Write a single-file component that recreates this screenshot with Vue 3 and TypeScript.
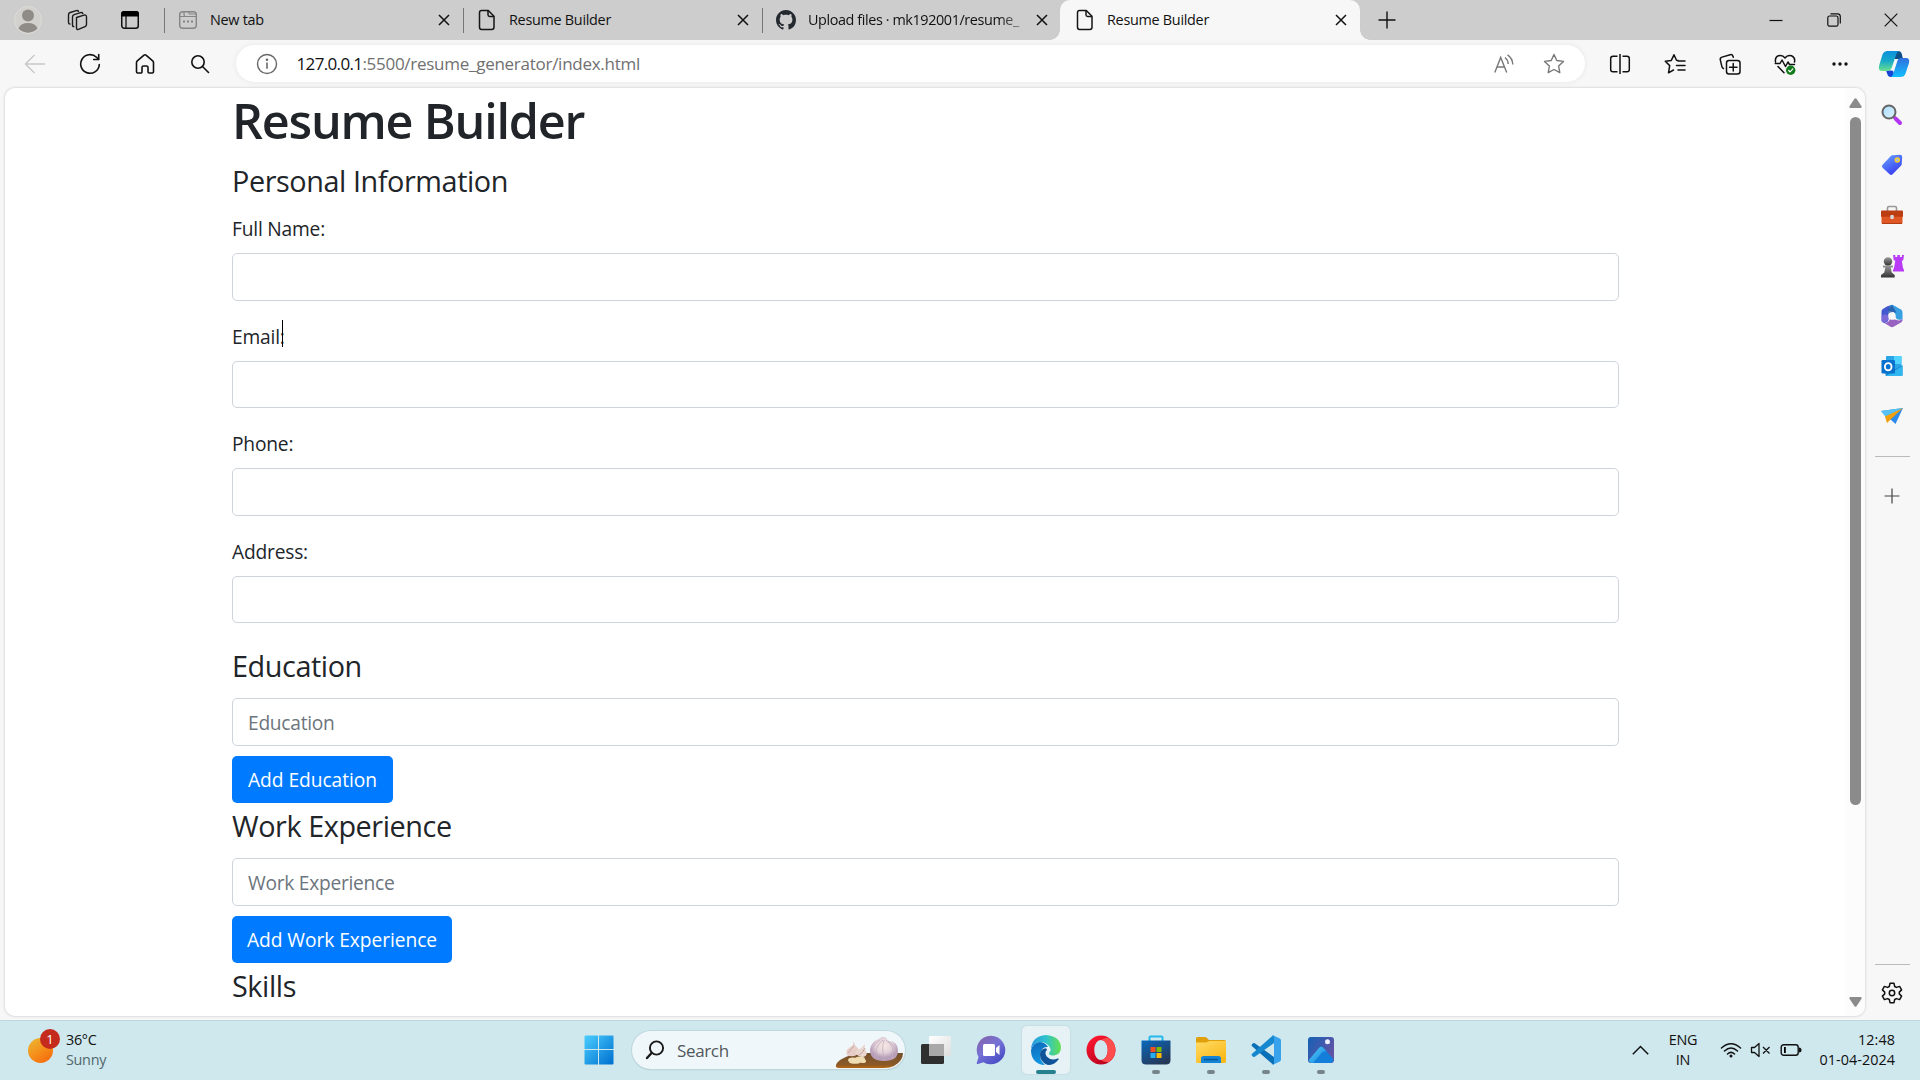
<script setup lang="ts">
import { ref } from 'vue'

interface Tab {
  title: string
  icon: 'newtab' | 'file' | 'github'
  active?: boolean
}

const tabs: Tab[] = [
  { title: 'New tab', icon: 'newtab' },
  { title: 'Resume Builder', icon: 'file' },
  { title: 'Upload files · mk192001/resume_', icon: 'github' },
  { title: 'Resume Builder', icon: 'file', active: true },
]

const fields = ref([
  { label: 'Full Name:', value: '' },
  { label: 'Email:', value: '', caret: true },
  { label: 'Phone:', value: '' },
  { label: 'Address:', value: '' },
])

const sections = ref([
  { title: 'Education', value: '', button: 'Add Education', width: 161 },
  { title: 'Work Experience', value: '', button: 'Add Work Experience', width: 220 },
])
</script>

<template>
  <div class="screen">
    <header class="tabbar">
      <div class="tab-tools">
        <svg class="profile" width="28" height="28" viewBox="0 0 28 28">
          <circle cx="14" cy="14" r="13.5" fill="#d3d1cd" stroke="#dddbd7" />
          <circle cx="14" cy="9.500" r="6" fill="#8f8b86" />
          <path d="M4.500 22.500q2-5.500 9.500-5.500t9.500 5.500a13 13 0 0 1-19 0z" fill="#8f8b86" />
        </svg>
        <svg class="workspaces" width="22" height="22" viewBox="0 0 22 22" fill="none" stroke="#1b1b1b" stroke-width="1.4" stroke-linejoin="round" stroke-linecap="round">
          <path d="M10.500 8.500l7.500-2.400q2.500-.6 2.500 2v7.400q0 1.500-1.500 2.100l-6 2.600q-2.500 1-2.500-1.500z" />
          <path d="M7.800 17.500q-1.300.2-1.300-1.500V8q0-1.700 1.700-2.300l6.300-2q1.800-.5 2.300.8" />
          <path d="M4 15q-1.500 0-1.500-1.600V5.700Q2.500 4 4.200 3.500l6-1.900q1.700-.4 2.300.7" />
        </svg>
        <svg class="tab-actions" width="20" height="20" viewBox="0 0 20 20">
          <rect x="1.750" y="1.750" width="16.500" height="16.500" rx="2.500" fill="none" stroke="#111" stroke-width="1.500" />
          <path d="M1 6.500V4a3 3 0 0 1 3-3h12a3 3 0 0 1 3 3v2.500z" fill="#000" />
          <path d="M6 6v12" stroke="#111" stroke-width="1.300" />
        </svg>
      </div>

      <div v-for="(tab, i) in tabs" :key="i" class="tab" :class="{ active: tab.active }">
        <svg v-if="tab.icon === 'newtab'" class="favicon" width="20" height="20" viewBox="0 0 20 20" fill="none" stroke="#858585" stroke-width="1.400">
          <rect x="1.700" y="1.700" width="16.600" height="16.600" rx="3" />
          <path d="M2 6.500h5.500q-1.500-.5-1.500-2V2M7.500 6.500q-1.500 0 0 0H18M11 2v1q0 1 1 1h6" stroke-width="1.200" />
          <path d="M5 11.500h2m2 0h2m2 0h2" stroke-width="2" />
        </svg>
        <svg v-else-if="tab.icon === 'file'" class="favicon" width="20" height="22" viewBox="0 0 20 22" fill="none" stroke="#151515" stroke-width="1.500" stroke-linejoin="round">
          <path d="M4.500 1.500h6.800l5.700 5.800v11q0 2.200-2.200 2.200H4.500Q2.500 20.500 2.500 18.300V3.700Q2.500 1.500 4.500 1.500z" />
          <path d="M11 1.800v4q0 1.700 1.700 1.700h4.200" />
        </svg>
        <svg v-else class="favicon" width="20" height="20" viewBox="0 0 16 16" fill="#24292f">
          <path d="M8 0C3.580 0 0 3.580 0 8c0 3.540 2.290 6.530 5.470 7.590.4.070.55-.17.55-.38 0-.19-.01-.82-.01-1.490-2.010.37-2.530-.49-2.690-.94-.09-.23-.48-.94-.82-1.130-.28-.15-.68-.52-.01-.53.63-.01 1.080.58 1.230.82.72 1.210 1.870.87 2.330.66.07-.52.28-.87.51-1.070-1.780-.2-3.640-.89-3.640-3.950 0-.87.31-1.590.82-2.150-.08-.2-.36-1.020.08-2.120 0 0 .67-.21 2.200.82.64-.18 1.320-.27 2-.27s1.360.09 2 .27c1.530-1.040 2.200-.82 2.200-.82.44 1.100.16 1.920.08 2.120.51.56.82 1.270.82 2.150 0 3.070-1.870 3.750-3.650 3.950.29.25.54.73.54 1.480 0 1.070-.01 1.930-.01 2.200 0 .21.15.46.55.38A8.010 8.010 0 0 0 16 8c0-4.420-3.580-8-8-8z" />
        </svg>
        <span class="tab-title" :class="{ faded: tab.icon === 'github' }">{{ tab.title }}</span>
        <svg class="tab-close" width="12" height="12" viewBox="0 0 12 12" stroke="#111" stroke-width="1.500"><path d="M1 1l10 10M11 1L1 11" /></svg>
      </div>

      <svg class="new-tab" width="18" height="18" viewBox="0 0 18 18" stroke="#111" stroke-width="1.400"><path d="M9 .5v17M.5 9h17" /></svg>
      <div class="win-controls">
        <svg width="14" height="14" viewBox="0 0 14 14" stroke="#111" stroke-width="1.200"><path d="M.5 7.500h13" /></svg>
        <svg width="14" height="14" viewBox="0 0 14 14" fill="none" stroke="#111" stroke-width="1.200">
          <rect x=".8" y="3" width="10.200" height="10.200" rx="1.800" />
          <path d="M3.500.8h7q2.800 0 2.800 2.800v7" />
        </svg>
        <svg width="14" height="14" viewBox="0 0 14 14" stroke="#111" stroke-width="1.200"><path d="M.7.7l12.600 12.600M13.300.7L.7 13.300" /></svg>
      </div>
    </header>

    <nav class="toolbar">
      <div class="slot">
        <svg width="22" height="20" viewBox="0 0 22 20" fill="none" stroke="#c9c9c9" stroke-width="1.500"><path d="M21 10H1.500M10.500 1l-9 9 9 9" /></svg>
      </div>
      <div class="slot">
        <svg width="22" height="22" viewBox="0 0 22 22" fill="none" stroke="#111" stroke-width="1.600" stroke-linecap="round" stroke-linejoin="round">
          <path d="M20.300 11.500a9.300 9.300 0 1 1-2.800-7.200l2 2" /><path d="M19.700 1.500v5h-5" />
        </svg>
      </div>
      <div class="slot">
        <svg width="20" height="22" viewBox="0 0 20 22" fill="none" stroke="#111" stroke-width="1.600" stroke-linejoin="round">
          <path d="M1.500 9.500q0-1 .8-1.700L9 2.100q1-.8 2 0l6.700 5.700q.8.700.8 1.700v9.300q0 1.200-1.200 1.200h-3.100q-1.200 0-1.200-1.200v-4.300q0-1.500-1.500-1.500h-3q-1.500 0-1.500 1.500v4.300Q7 20 5.800 20H2.700q-1.200 0-1.200-1.200z" />
        </svg>
      </div>
      <div class="slot">
        <svg width="20" height="20" viewBox="0 0 20 20" fill="none" stroke="#111" stroke-width="1.600" stroke-linecap="round"><circle cx="8" cy="8" r="6.200" /><path d="M12.500 12.500l6 6" /></svg>
      </div>
      <div class="omnibox">
        <svg class="info" width="22" height="22" viewBox="0 0 22 22" fill="none" stroke="#686868" stroke-width="1.400">
          <circle cx="11" cy="11" r="9.500" /><path d="M11 9.500v6.300" stroke-width="1.600" /><circle cx="11" cy="6.700" r=".6" fill="#686868" />
        </svg>
        <span class="url"><b>127.0.0.1</b>:5500/resume_generator/index.html</span>
        <svg class="aloud" width="20" height="20" viewBox="0 0 20 20" fill="none" stroke="#777" stroke-width="1.400">
          <path d="M.8 18.500L6.700 3.500l6 15M3 13h7.500M11 3.500q3 2.300 3.200 6.500M13.500.8q5 3.200 5.300 9.700" />
        </svg>
        <svg width="22" height="22" viewBox="0 0 22 22" fill="none" stroke="#777" stroke-width="1.400" stroke-linejoin="round">
          <path d="M11 1.500l2.800 6 6.700.9-4.900 4.600 1.200 6.700-5.800-3.200-5.800 3.200 1.200-6.700L1.500 8.400l6.700-.9z" />
        </svg>
      </div>
      <div class="slot">
        <svg width="22" height="22" viewBox="0 0 22 22" fill="none" stroke="#111" stroke-width="1.500"><path d="M8.500 3.300H4Q1.700 3.300 1.700 5.600v10.800q0 2.300 2.300 2.300h4.500M13.500 3.300H18q2.300 0 2.300 2.300v10.800q0 2.300-2.300 2.300h-4.500M11 1v20" /></svg>
      </div>
      <div class="slot">
        <svg width="22" height="22" viewBox="0 0 22 22" fill="none" stroke="#111" stroke-width="1.500" stroke-linejoin="round" stroke-linecap="round">
          <path d="M14 7.500l-1.500-.2L10 1.800 7.300 7.400l-6 .9 4.400 4.300-1.200 7.200 5-2.800M14 8h7M12.500 12.500H21M14 17h7" />
        </svg>
      </div>
      <div class="slot">
        <svg width="22" height="22" viewBox="0 0 22 22" fill="none" stroke="#111" stroke-width="1.500" stroke-linecap="round">
          <rect x="7.500" y="7.500" width="13.500" height="13.500" rx="2.500" /><path d="M14.250 10.500v7.500M10.500 14.250H18M4.500 15.500Q3.200 15 2.900 13.600L1.300 6.800Q.9 4.700 3 4.100l8.200-2.400q2.100-.5 2.800 1.600l.3 1" />
        </svg>
      </div>
      <div class="slot">
        <svg width="22" height="22" viewBox="0 0 22 22" fill="none" stroke="#111" stroke-width="1.500" stroke-linejoin="round" stroke-linecap="round">
          <path d="M1.500 9Q.8 4 4.500 2.700 8.500 1.500 11 5q2.500-3.500 6.500-2.300Q21.500 4.500 20.500 9M1.300 10.500H6l2-3.500 3.500 6.500L14 9l1.500 2.500h5M4 13.500l6 6.300" />
          <circle cx="16.700" cy="17.300" r="4.700" fill="#127b1c" stroke="none" /><path d="M14.700 17.500l1.400 1.400 2.700-3" stroke="#fff" stroke-width="1.200" />
        </svg>
      </div>
      <div class="slot">
        <svg width="18" height="6" viewBox="0 0 18 6" fill="#111"><circle cx="3" cy="3" r="1.700" /><circle cx="9" cy="3" r="1.700" /><circle cx="15" cy="3" r="1.700" /></svg>
      </div>
      <div class="copilot">
        <svg width="32" height="28" viewBox="0 0 32 28">
          <defs>
            <linearGradient id="cpA" x1="0" y1="0" x2="0" y2="1"><stop offset="0" stop-color="#0a90dd" /><stop offset=".5" stop-color="#18aac9" /><stop offset="1" stop-color="#6be08f" /></linearGradient>
            <linearGradient id="cpB" x1="0" y1="0" x2="0" y2="1"><stop offset="0" stop-color="#2f6fdd" /><stop offset="1" stop-color="#13c0ff" /></linearGradient>
          </defs>
          <path d="M16 1h4q3 0 3.800 3l1.200 5h-8z" fill="#0c4f86" />
          <path d="M8 20.500h7l2 6.500h-4q-3 0-3.700-3z" fill="#1746d6" />
          <path d="M9.500 1H21q-2 .5-3 4l-4 12q-1.200 4-5 4H4q-4 0-3-5L4.500 4.500Q5.800 1 9.500 1z" fill="url(#cpA)" />
          <path d="M23 8h5q4 0 3 5l-3.500 10.500Q26.300 27 22.500 27H13q1.500-1 2.500-4l3.500-11q1-4 4-4z" fill="url(#cpB)" />
          <path d="M17.500 9.500h1.800l-4 11h-1.800q1-1 1.500-3z" fill="#f7f7f7" />
        </svg>
      </div>
    </nav>

    <div class="middle">
      <main class="viewport">
        <form class="page" @submit.prevent>
          <h1>Resume Builder</h1>
          <h2>Personal Information</h2>
          <div class="fields">
            <div v-for="f in fields" :key="f.label" class="field">
              <label><span>{{ f.label }}</span><i v-if="f.caret" class="caret"></i></label>
              <input v-model="f.value" type="text" />
            </div>
          </div>
          <section v-for="s in sections" :key="s.title">
            <h2>{{ s.title }}</h2>
            <input v-model="s.value" type="text" :placeholder="s.title" />
            <button type="button" :style="{ width: s.width + 'px' }">{{ s.button }}</button>
          </section>
          <h2>Skills</h2>
        </form>
        <div class="scrollbar">
          <svg width="13" height="10" viewBox="0 0 13 10"><path d="M5.500.8q1-1.300 2 0l5 7.500q.6 1.700-1 1.700h-10q-1.600 0-1-1.700z" fill="#8b8b8b" /></svg>
          <div class="thumb"></div>
          <svg class="down" width="13" height="10" viewBox="0 0 13 10"><path d="M5.500 9.200q1 1.300 2 0l5-7.500Q13.100 0 11.500 0h-10Q-.1 0 .5 1.700z" fill="#8b8b8b" /></svg>
        </div>
      </main>

      <aside class="sidebar">
        <div class="side-slot">
          <svg width="22" height="22" viewBox="0 0 22 22"><defs><linearGradient id="lens" x2="1" y2="1"><stop stop-color="#a9dcff" /><stop offset="1" stop-color="#dff3ff" /></linearGradient></defs>
            <path d="M12 12l3 3" stroke="#666" stroke-width="3" /><circle cx="8" cy="8" r="6.500" fill="url(#lens)" stroke="#666" stroke-width="2" /><path d="M14.500 14.500l4.500 4.500" stroke="#b335f2" stroke-width="4" stroke-linecap="round" /></svg>
        </div>
        <div class="side-slot">
          <svg width="22" height="22" viewBox="0 0 22 22"><defs><linearGradient id="tag" x2=".6" y2="1"><stop stop-color="#69a8ff" /><stop offset="1" stop-color="#383cf0" /></linearGradient></defs>
            <path d="M11.500 1.300L19 .7q2.300 0 2.200 2.300l-.5 7q0 1-.8 1.800l-8.300 8.500q-1.500 1.500-3 0l-7-6.500q-1.500-1.500 0-3l8-8.600q.8-.8 1.900-.9z" fill="url(#tag)" /><circle cx="16.300" cy="6" r="2" fill="#a4bcff" stroke="#f8cf29" stroke-width="1.500" /></svg>
        </div>
        <div class="side-slot">
          <svg width="24" height="20" viewBox="0 0 24 20"><path d="M7.500 6V3q0-1.500 1.500-1.500h6q1.500 0 1.500 1.500v3" fill="none" stroke="#999" stroke-width="1.600" /><rect x="1.500" y="7" width="21" height="12" rx="1.500" fill="#df5724" /><path d="M1 6.500Q1 5.500 2 5.500h20q1 0 1 1v5.300H1z" fill="#bd3d13" /><path d="M2 18.500h20" stroke="#b23c14" /><rect x="10.300" y="10" width="3.500" height="4" rx="1" fill="#d6d9dc" /></svg>
        </div>
        <div class="side-slot">
          <svg width="24" height="24" viewBox="0 0 24 24"><defs><linearGradient id="pawn" x2="0" y2="1"><stop stop-color="#999" /><stop offset="1" stop-color="#333" /></linearGradient></defs>
            <path d="M13 1h2.300v2h2V1h2.600v2h2V1H24l-.8 5.500h-1.400L23 14l1 2v1.500H13V16l1-2 1.300-7.500h-1.500z" fill="#b83cf5" /><circle cx="8" cy="7.500" r="4.200" fill="url(#pawn)" /><path d="M3 11.500h10v2h-2.300l1 5 3 2.500v2.500H1V21l3.300-2.500 1-5H3z" fill="url(#pawn)" /></svg>
        </div>
        <div class="side-slot">
          <svg width="22" height="24" viewBox="0 0 22 24"><path d="M10 1Q6 2 1.500 5.300.5 6 .5 7.500V17q1 2 3 2 3.500-.5 4-3.500V8z" fill="#4459d0" /><path d="M9.500 1.200q1.500-.7 3 0l7.500 4.300q1.500 1 1.500 2.700v7q-5.500 2-7-2L13 8.500 7 6.500z" fill="#389fe0" /><path d="M11 .8l4.500 8L12 8 7.500 10.500 7 5.500z" fill="#244c9f" opacity=".7" /><path d="M21.500 15v1.500q-.2 1.200-1.500 2l-7.500 4.300q-1.500.8-3 0L2.500 18.500q5 1 6.500-3.500l6 .8q4 1.500 6.500-.8z" fill="#9762c1" /><path d="M.5 12Q4 9 8 12l-.3 3q-1.500 3-5.500 3.300-1.700-.7-1.700-2.500z" fill="#9b72dd" opacity=".65" /><circle cx="11" cy="12" r="3.700" fill="#f7f7f7" /></svg>
        </div>
        <div class="side-slot">
          <svg width="22" height="22" viewBox="0 0 22 22"><path d="M5 2q0-1 1-1h13.500q1 0 1 1v17h-15.500z" fill="#2aa5e8" /><path d="M13 1h6.500q1 0 1 1v7H13z" fill="#50d4ff" /><path d="M4.500 11l8.500 4 8.500-5v10q0 1-1 1h-15q-1 0-1-1z" fill="#158bd5" /><path d="M5 21l16.500-10v9q0 1-1 1z" fill="#32b6ef" /><rect x=".5" y="5" width="13.500" height="13.500" rx="1.300" fill="#0871cd" /><ellipse cx="7.200" cy="11.700" rx="3.300" ry="3.600" fill="none" stroke="#fff" stroke-width="1.900" /></svg>
        </div>
        <div class="side-slot">
          <svg width="22" height="18" viewBox="0 0 22 18"><path d="M0 4l22-3-7.500 16-5-4.500z" fill="#2d8cea" /><path d="M0 4l22-3L5 10.500z" fill="#55c1f6" /><path d="M4 9.500L22 1 9.500 12.500 6 16z" fill="#f0a00e" /></svg>
        </div>
        <hr />
        <svg class="side-plus" width="16" height="16" viewBox="0 0 16 16" stroke="#444" stroke-width="1.200"><path d="M8 .5v15M.5 8h15" /></svg>
        <hr class="bottom" />
        <svg class="gear" width="22" height="22" viewBox="0 0 22 22" fill="none" stroke="#111" stroke-width="1.500" stroke-linejoin="round">
          <path d="M9 1.300h4l.7 3.200 1.700.9 3.200-1 2 3.500-2.300 2.200v1.800l2.300 2.200-2 3.500-3.200-1-1.700.9-.7 3.200H9l-.7-3.200-1.700-.9-3.200 1-2-3.500 2.300-2.200v-1.800L1.400 7.900l2-3.500 3.200 1 1.700-.9z" /><circle cx="11" cy="11" r="2.700" />
        </svg>
      </aside>
    </div>

    <footer class="taskbar">
      <div class="weather">
        <div class="sun"><span class="badge">1</span></div>
        <div class="two-line"><span>36°C</span><span class="muted">Sunny</span></div>
      </div>

      <div class="dock">
        <svg class="start" width="30" height="30" viewBox="0 0 30 30"><defs><linearGradient id="win" gradientUnits="userSpaceOnUse" x1="0" y1="0" x2="29" y2="29"><stop stop-color="#4bcfff" /><stop offset="1" stop-color="#0070d0" /></linearGradient></defs>
          <path d="M1.500.5H14V14H.5V1.500q0-1 1-1zM15 .5h13.500q1 0 1 1V14H15zM.5 15H14v14.500H1.500q-1 0-1-1zM15 15h14.500v13.500q0 1-1 1H15z" fill="url(#win)" /></svg>
        <div class="search">
          <svg width="20" height="20" viewBox="0 0 20 20" fill="none" stroke="#1b1b1b" stroke-width="1.900" stroke-linecap="round"><circle cx="11.500" cy="8" r="6.600" /><path d="M6.800 12.800L2 18" stroke-width="2.400" /></svg>
          <span>Search</span>
          <svg class="garlic" width="69" height="32" viewBox="0 0 69 32">
            <defs><linearGradient id="wood" x2="0" y2="1"><stop stop-color="#73502d" /><stop offset=".8" stop-color="#8c5a27" /><stop offset="1" stop-color="#b8660d" /></linearGradient>
              <radialGradient id="bulb" cx=".5" cy=".35"><stop stop-color="#f6e9e4" /><stop offset=".6" stop-color="#e4d3da" /><stop offset="1" stop-color="#b9a0ba" /></radialGradient></defs>
            <path d="M1 31Q0 28 5 24q9-6 24-7h39q0 8-9 13-4 2-10 2H4q-2 0-3-1z" fill="url(#wood)" />
            <path d="M12 19q-2-4 2-7l4-3 .5-4 2 5q5 3 2.500 8-5 4-11 1z" fill="#e6cdc8" /><path d="M21 18q-1-5 4-5l5-5-.5 5q4 4 1 7-4 3-9.500-2z" fill="#ead5cf" />
            <path d="M13 17q4-5 6-7M24 19q4-2 6-7" stroke="#c7a3a0" fill="none" />
            <path d="M44.500 2.500q3-2.500 7-.5l1.500 3q10 0 10 9.500 0 10.500-14 10.500-14 0-14-11.500Q36 6 44.500 2.500z" fill="url(#bulb)" />
            <path d="M48 4q-10 8-6 18M49 4q-3 9 1 20M51 4q10 7 6 18M53 5q7 4 8 12M45 4q-7 4-8 12" stroke="#c3adbf" fill="none" stroke-width=".8" />
            <g fill="#eedcb2"><ellipse cx="18" cy="24" rx="5" ry="2.500" /><ellipse cx="25" cy="23" rx="5" ry="2.500" /><ellipse cx="20" cy="26" rx="6" ry="1.800" /><ellipse cx="28" cy="25" rx="3" ry="2" /></g>
          </svg>
        </div>
        <div class="app">
          <svg width="30" height="28" viewBox="0 0 30 28"><defs><linearGradient id="tv" x2="1" y2="1"><stop stop-color="#fff" /><stop offset="1" stop-color="#ddd" /></linearGradient></defs><rect x="0" y="8" width="23" height="20" rx="1.500" fill="#2e2f2e" /><rect x="8" y="0" width="22" height="20" rx="1.500" fill="url(#tv)" /><path d="M8 8h15v12H9.500Q8 20 8 18.500z" fill="#a9a9a9" /></svg>
        </div>
        <div class="app">
          <svg width="30" height="30" viewBox="0 0 30 30"><defs><linearGradient id="chat" x2=".7" y2="1"><stop stop-color="#8660a4" /><stop offset=".5" stop-color="#7772d6" /><stop offset="1" stop-color="#484bc6" /></linearGradient></defs><path d="M15 .7a14.300 14.300 0 1 1-7.500 26.500L2 29q-1.500.2-1.200-1.300L2.500 22A14.300 14.300 0 0 1 15 .7z" fill="url(#chat)" /><rect x="7" y="9" width="12" height="12" rx="1.500" fill="#fff" /><path d="M20 13l3.500-3v10L20 17z" fill="#fff" /></svg>
        </div>
        <div class="app current">
          <svg width="32" height="32" viewBox="0 0 32 32">
            <defs><linearGradient id="eT" x1="0" y1=".5" x2="1" y2=".5"><stop stop-color="#2697dd" /><stop offset=".5" stop-color="#2fc2cf" /><stop offset="1" stop-color="#64e04d" /></linearGradient><linearGradient id="eB" x2=".2" y2="1"><stop stop-color="#0b69ba" /><stop offset="1" stop-color="#1495df" /></linearGradient></defs>
            <path d="M1 16Q1 22 4 26q4 5 11 5Q8 25 11 17q2-4.500 7-4-3-5-9-5-6 1-8 8z" fill="url(#eB)" />
            <path d="M11.500 16q-3 5 0 10 3 5 8 5 5-.5 9-5.500 1-1.500-.8-1-7 2.500-11-2-2.700-4 .3-6.500-.5-3.500-5.500 0z" fill="#115399" />
            <path d="M1 15Q2 2 16 1q14 1 15 12 .2 7.500-7 8.500-5 0-5-2 0-.8 1-2 1.200-2 0-4Q17 8.500 11 8 4 8 1 15z" fill="url(#eT)" />
          </svg>
          <i class="bar"></i>
        </div>
        <div class="app">
          <svg width="30" height="30" viewBox="0 0 30 30"><defs><linearGradient id="op" x1=".2" x2=".8" y2="1"><stop stop-color="#ff1830" /><stop offset="1" stop-color="#b3001c" /></linearGradient></defs><path d="M15 .5a14.500 14.500 0 1 0 0 29 14.500 14.500 0 0 0 0-29zm0 4.500c4 0 6.700 4.500 6.700 10S19 25 15 25 8.300 20.500 8.300 15 11 5 15 5z" fill="url(#op)" fill-rule="evenodd" /><path d="M15 5q4-3 8.500-1.700A14.500 14.500 0 0 1 23.500 26.700Q19 28 15 25c4 0 6.700-4.500 6.700-10S19 5 15 5z" fill="#ff4c4c" /></svg>
        </div>
        <div class="app">
          <svg width="30" height="30" viewBox="0 0 30 30"><defs><linearGradient id="store" x2=".6" y2="1"><stop stop-color="#0969be" /><stop offset="1" stop-color="#253858" /></linearGradient></defs><path d="M8.500 7V2.500q0-1 1-1h11q1 0 1 1V7" fill="none" stroke="#24b9ed" stroke-width="2" /><path d="M.5 5.500h29V25q0 4.500-4.500 4.500H5Q.5 29.500.5 25z" fill="url(#store)" /><path d="M9.500 12h5v5h-5z" fill="#f25022" /><path d="M15.500 12h5v5h-5z" fill="#7fba00" /><path d="M9.500 18h5v5h-5z" fill="#28aef0" /><path d="M15.500 18h5v5h-5z" fill="#ffb900" /></svg>
          <i class="dot"></i>
        </div>
        <div class="app">
          <svg width="30" height="28" viewBox="0 0 30 28"><defs><linearGradient id="fold" x2=".7" y2="1"><stop stop-color="#ffdb66" /><stop offset="1" stop-color="#f9b817" /></linearGradient></defs><path d="M0 2.500Q0 1 1.500 1H9q1.200 0 2 1l2 2h15.500Q30 4 30 5.500V10H0z" fill="#dfa00b" /><path d="M0 6.500h10l3.500-1.500H30v20.500q0 1.500-1.500 1.500h-27Q0 27 0 25.500z" fill="url(#fold)" /><path d="M5 27v-4.500Q5 20 7.500 20h15q2.500 0 2.500 2.500V27z" fill="#1584d4" /><path d="M8 23.500h14" stroke="#075898" stroke-width="1.500" /></svg>
          <i class="dot"></i>
        </div>
        <div class="app">
          <svg width="30" height="30" viewBox="0 0 30 30"><path d="M1.500 8.700Q2.300 7.500 3.800 8.200L23 22v7.500q-.8.300-1.700-.5L.8 11q-.6-1 .7-2.300z" fill="#0a70b8" /><path d="M1.500 21.300Q2.300 22.500 3.800 21.800L23 8V.5q-.8-.3-1.700.5L.8 19q-.6 1 .7 2.300z" fill="#1688cf" /><path d="M22.300.5l6.200 2.800Q30 4 30 5.500v19q0 1.500-1.500 2.200l-6.200 2.800q-1 .3-1.700-.5Q23 30 23 28V2Q23 .5 20.600 1q.7-.8 1.700-.5z" fill="#38a3ec" /></svg>
          <i class="dot"></i>
        </div>
        <div class="app">
          <svg width="26" height="26" viewBox="0 0 26 26"><defs><linearGradient id="ph" x2="1" y2=".6"><stop stop-color="#1561b5" /><stop offset="1" stop-color="#6553a5" /></linearGradient><linearGradient id="mt" x2="1" y2="1"><stop stop-color="#4cc9fa" /><stop offset="1" stop-color="#1b86db" /></linearGradient></defs><rect width="26" height="26" rx="3" fill="url(#ph)" /><path d="M1.500 25L11.500 10.500q1.800-2 3.600 0L25.500 22q-.3 4-3 4H3q-1 0-1.500-1z" fill="#147edb" /><path d="M.8 23L11 11q2.200-2.500 4.500 0l3 3.500q-2.500-1-4.500 1L5 26H3Q1.500 25.500.8 23z" fill="url(#mt)" /><circle cx="19.500" cy="4.700" r="2.500" fill="#eef1ff" /></svg>
          <i class="dot"></i>
        </div>
      </div>

      <div class="tray">
        <svg class="chev" width="17" height="10" viewBox="0 0 17 10" fill="none" stroke="#111" stroke-width="1.500"><path d="M.8 9.200l7.700-7.700 7.700 7.700" /></svg>
        <div class="two-line lang"><span>ENG</span><span>IN</span></div>
        <svg class="wifi" width="22" height="16" viewBox="0 0 22 16" fill="none" stroke="#111" stroke-width="1.500" stroke-linecap="round"><path d="M1.500 6q9.500-8.500 19 0M4.500 9q6.500-6 13 0M7.500 12q3.500-3.300 7 0" /><circle cx="11" cy="14" r="1.500" fill="#111" stroke="none" /></svg>
        <svg class="vol" width="21" height="16" viewBox="0 0 21 16" fill="none" stroke="#111" stroke-width="1.300" stroke-linejoin="round"><path d="M1.500 5.500h3L9 1.500v13L4.500 10.500h-3zM13 5l6.500 6.500M19.500 5L13 11.500" /></svg>
        <svg class="bat" width="22" height="14" viewBox="0 0 22 14"><rect x="1.200" y="1.700" width="17" height="10.600" rx="2.500" fill="none" stroke="#111" stroke-width="1.400" /><path d="M4 4h1.800v6H4z" /><path d="M19 4.500q2.500 0 2.500 2.500T19 9.500z" fill="#111" /></svg>
        <div class="two-line clock"><span>12:48</span><span>01-04-2024</span></div>
      </div>
    </footer>
  </div>
</template>

<style>
html, body { margin: 0; overflow: hidden; }
</style>

<style scoped>
* { box-sizing: border-box; }
svg { display: block; flex: none; }
.screen {
  width: 1920px; height: 1080px; display: flex; flex-direction: column;
  background: #f7f7f7; color: #212529; overflow: hidden;
  font-family: "Open Sans", "Noto Sans", sans-serif;
}

.tabbar { height: 40px; flex: none; display: flex; align-items: center; background: #cdcdcd; }
.tab-tools { width: 163px; display: flex; align-items: center; }
.profile { margin-left: 14px; }
.workspaces { margin-left: 24px; }
.tab-actions { margin-left: 32px; }
.tab { position: relative; width: 299px; height: 40px; display: flex; align-items: center; padding-left: 15px; }
.tab:not(.active)::before { content: ""; position: absolute; left: 1px; top: 8px; width: 1px; height: 25px; background: #777; }
.tab.active { width: 300px; background: #f7f7f7; border-radius: 10px 10px 0 0; }
.tab.active::before, .tab.active::after { content: ""; position: absolute; bottom: 0; width: 10px; height: 10px; }
.tab.active::before { left: -10px; background: radial-gradient(circle at 0 0, #cdcdcd 9.5px, #f7f7f7 10px); }
.tab.active::after { right: -10px; background: radial-gradient(circle at 100% 0, #cdcdcd 9.5px, #f7f7f7 10px); }
.tab-title { margin-left: 12px; width: 217px; font-size: 14.4px; line-height: 20px; letter-spacing: -0.28px; color: #111; white-space: nowrap; }
.tab-title.faded { letter-spacing: -0.4px; -webkit-mask-image: linear-gradient(90deg, #000 88%, rgba(0, 0, 0, 0.25) 100%); mask-image: linear-gradient(90deg, #000 88%, rgba(0, 0, 0, 0.25) 100%); }
.tab-close { margin-left: 11px; }
.new-tab { margin-left: 18px; }
.win-controls { margin-left: auto; display: flex; gap: 43.500px; padding-right: 22px; }

.toolbar { height: 48px; flex: none; display: flex; align-items: center; padding: 0 0 1px 7.500px; }
.slot { width: 55px; display: flex; justify-content: center; }
.omnibox { width: 1349px; height: 37px; margin: 0 8px; border-radius: 19px; background: #fff; display: flex; align-items: center; padding: 0 20px; box-shadow: 0 0 4px 1px #ebebeb; }
.url { margin-left: 19px; font-size: 17px; letter-spacing: -0.27px; color: #707070; white-space: nowrap; }
.url b { font-weight: 400; letter-spacing: -0.65px; color: #111; }
.aloud { margin-left: auto; margin-right: 29px; }
.copilot { width: 52px; display: flex; justify-content: center; }

.middle { height: 932px; flex: none; display: flex; padding-left: 5px; }
.viewport { width: 1860px; height: 928px; background: #fff; border-radius: 10px; overflow: hidden; display: flex; justify-content: space-between; box-shadow: 0 0 2px 1px #dedede; }
.page { width: 1387px; margin-left: 227px; }
h1 { margin: 0 0 8px; padding-top: 2px; height: 62px; font-size: 48.500px; line-height: 60px; font-weight: 600; letter-spacing: -1.2px; white-space: nowrap; }
h2 { margin: 0 0 10px; font-size: 28.800px; line-height: 45px; font-weight: 400; letter-spacing: -0.42px; }
.field { margin-bottom: 20px; }
label { display: flex; height: 30px; margin-bottom: 10px; font-size: 19.200px; line-height: 32px; letter-spacing: -0.2px; }
.caret { width: 1px; height: 27px; margin: -1px 0 0 -3px; background: #000; }
input { display: block; width: 100%; height: 47.500px; padding: 9px 15px 7px; border: 1px solid #ced4da; border-radius: 5px; background: #fff; font: inherit; font-size: 19.200px; letter-spacing: -0.27px; color: #495057; outline: none; }
input::placeholder { color: #6c757d; opacity: 1; }
button { display: block; height: 47.500px; margin-top: 10px; padding: 0; border: 0; border-radius: 5px; background: #007bff; color: #fff; font: inherit; font-size: 19.200px; letter-spacing: -0.05px; white-space: nowrap; }
.scrollbar { width: 19px; background: #fcfcfc; display: flex; flex-direction: column; align-items: center; padding: 10px 0 9px; }
.thumb { width: 11px; height: 688px; margin-top: 9px; border-radius: 6px; background: #8b8b8b; }
.down { margin-top: auto; }

.sidebar { width: 55px; display: flex; flex-direction: column; align-items: center; padding: 2px 1px 0 0; }
.side-slot { width: 54px; height: 50.200px; display: flex; align-items: center; justify-content: center; flex: none; }
hr { width: 35px; height: 1px; margin: 15px 0 0; border: 0; background: #bbb; flex: none; }
.side-plus { margin-top: 31px; }
hr.bottom { margin-top: auto; }
.gear { margin: 17px 0 16px; }

.taskbar { height: 60px; flex: none; display: flex; align-items: center; background: #cfe8ee; border-top: 1px solid #bdd8dd; color: #111; padding-bottom: 1px; }
.weather { width: 570px; display: flex; align-items: center; padding-left: 28px; }
.sun { position: relative; width: 25px; height: 25px; border-radius: 50%; background: linear-gradient(145deg, #eabb35, #f58b19 55%, #f46209); }
.badge { position: absolute; left: 12px; top: -9px; width: 20px; height: 20px; border-radius: 50%; background: #c42b1c; color: #fff; font-size: 13px; line-height: 20px; text-align: center; }
.two-line { display: flex; flex-direction: column; font-size: 14.400px; line-height: 20px; letter-spacing: -0.3px; white-space: nowrap; }
.weather .two-line { margin-left: 13px; }
.muted { color: #51676c; }
.dock { display: flex; align-items: center; }
.start { margin-left: 14px; }
.search { position: relative; width: 273px; height: 38px; margin: 0 2px 0 18px; padding-left: 13px; border-radius: 19px; background: #f0f7fa; box-shadow: 0 0 0 1px #bfd7dd, 0 1px 1px #8eaab0; display: flex; align-items: center; font-size: 17px; letter-spacing: -0.35px; color: #51585b; overflow: hidden; }
.search span { margin-left: 12px; }
.garlic { position: absolute; right: 1px; bottom: 1px; }
.app { position: relative; width: 48px; height: 48px; margin-right: 7px; display: flex; align-items: center; justify-content: center; border-radius: 5px; }
.search + .app { margin-left: 5px; }
.app.current { background: #e6f2f6; box-shadow: 0 0 1px 1px #c7dee4; }
.bar, .dot { position: absolute; bottom: 0; height: 4px; border-radius: 2px; }
.bar { width: 20px; background: #26808e; }
.dot { width: 8px; background: #76858a; }
.tray { margin-left: auto; height: 58px; display: flex; align-items: center; padding-right: 25px; }
.lang { width: 34px; margin-left: 17px; text-align: center; }
.wifi { margin-left: 20px; }
.vol { margin-left: 8px; }
.bat { margin-left: 9px; }
.clock { width: 93px; text-align: right; letter-spacing: 0.05px; }
</style>
